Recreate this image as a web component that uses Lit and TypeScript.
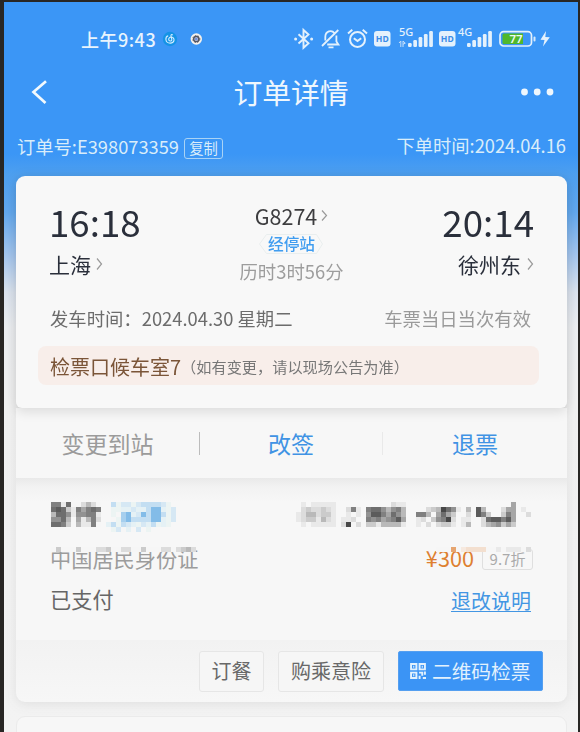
import { LitElement, html, css, svg } from "lit";
import { customElement, property } from "lit/decorators.js";

/* Redaction mosaic: rows of 5px cells, one palette letter per cell, "." is empty. */
@customElement("pixel-mask")
class PixelMask extends LitElement {
  @property({ attribute: false }) rows: string[] = [];
  static palette: Record<string, string> = {
    "0": "#484848", "1": "#5c5c5c", "2": "#6e6e6e", "3": "#808080", "4": "#929292",
    "5": "#a6a6a6", "6": "#b9b9b9", "7": "#cbcbcb", "8": "#dcdcdc", "9": "#e9e9e9",
    a: "#83bce8", b: "#a6cfee", c: "#c3def2", d: "#d6e8f4", e: "#e5f1f5", f: "#ecf4f3",
    o: "#e6a570", p: "#f3dfcf", q: "#f6e9df",
    w: "#f6f6f6",
  };
  static styles = css`
    :host { display: block; line-height: 0; }
    svg { display: block; }
  `;
  render() {
    const w = Math.max(...this.rows.map((r) => r.length)) * 5;
    const h = this.rows.length * 5;
    return html`<svg width=${w} height=${h} shape-rendering="crispEdges">
      ${this.rows.map((r, y) =>
        [...r].map((c, x) =>
          c === "." ? null : svg`<rect x=${x * 5} y=${y * 5} width="5" height="5" fill=${PixelMask.palette[c]}></rect>`
        )
      )}
    </svg>`;
  }
}

@customElement("status-bar")
class StatusBar extends LitElement {
  static styles = css`
    :host { display: flex; align-items: center; height: 24px; padding: 0 28px 0 77px; color: #e9f4fd; }
    .time { font-size: 18px; line-height: 24px; letter-spacing: 0.5px; font-weight: 500; margin-right: 5px; width: 77px; white-space: nowrap; }
    .app { margin-right: 13px; }
    svg { display: block; flex: none; overflow: visible; }
    .icons { display: flex; margin-left: auto; align-items: center; }
    text { font-family: "Noto Sans", sans-serif; font-weight: 600; }
    .net { font-weight: 500; }
    .hd { font-weight: 700; }
  `;
  hd() {
    return svg`<rect x="0" y="4" width="16.5" height="15.5" rx="3" fill="#e4f1fc"></rect>
      <text class="hd" x="8.3" y="14.9" font-size="8.6" text-anchor="middle" fill="#3b8de8">HD</text>`;
  }
  bars() {
    return [0, 1, 2, 3, 4].map(
      (i) => svg`<rect x=${9 + i * 5.3} y=${16 - i * 3} width="3.7" height=${4 + i * 3} rx="1.2" fill="#e4f1fc"></rect>`
    );
  }
  render() {
    return html`
      <span class="time">上午9:43</span>
      <svg class="app" width="14" height="24" viewBox="0 0 14 24" fill="none">
        <circle cx="7" cy="12" r="7.2" fill="#1593e6"></circle>
        <path d="M9.8 8.1C8.6 7 7.7 7.8 8 9l.8 3.4c.3 2-3 2.2-3.1.1-.1-1.6 1.2-2.6 2.8-2.5 3.5.3 3.6 5.9-1.3 6.1C1.8 16.1 1.9 9.7 5.2 8.8" stroke="#d5efff" stroke-width="1.1"></path>
      </svg>
      <svg width="11" height="24" viewBox="0 0 11 24" fill="none">
        <circle cx="6.3" cy="12" r="5.7" fill="#f4f1ec"></circle>
        <circle cx="6.3" cy="12" r="2.6" stroke="#505668" stroke-width="1.5"></circle>
        <circle cx="6.3" cy="12" r="3.5" stroke="#605c62" stroke-width="1" stroke-dasharray="1.5 1.4"></circle>
        <circle cx="6.3" cy="12" r="1.5" fill="#7391dc"></circle>
      </svg>
      <div class="icons">
        <svg width="27" height="24" viewBox="0 0 27 24" fill="none" stroke="#e4f1fc" stroke-width="1.9">
          <path d="M4.500 7.300l10 9-5 4.500V3l5 4.500-10 9"></path>
          <circle cx="1.6" cy="12" r="1.5" fill="#e4f1fc" stroke="none"></circle>
          <circle cx="17.6" cy="12" r="1.5" fill="#e4f1fc" stroke="none"></circle>
        </svg>
        <svg width="26" height="24" viewBox="0 0 26 24" fill="none" stroke="#e4f1fc" stroke-width="1.8">
          <path d="M1 19L17.300 3M4.300 13.500V10c0-6 6.500-7.500 9-4M15.400 8.500v6l2 3H6.200M7.500 20.300h5"></path>
        </svg>
        <svg width="27" height="24" viewBox="0 0 27 24" fill="none" stroke="#e4f1fc" stroke-width="2">
          <circle cx="10.5" cy="12.5" r="7.5"></circle>
          <path d="M6.800 11.200l3.700 2.800 3.700-2.800M1 6.500l4.300-3.700M20 6.500l-4.300-3.700"></path>
        </svg>
        <svg width="25" height="24" viewBox="0 0 25 24">${this.hd()}</svg>
        <svg width="40" height="24" viewBox="0 0 40 24">
          <text class="net" x="0" y="9" font-size="11" fill="#e4f1fc">5G</text>
          <path d="M0 16l1.800-2v6M4 20v-6l2.300 2.200-2.300 1" fill="none" stroke="#c5dffa" stroke-width="1"></path>
          ${this.bars()}
        </svg>
        <svg width="19.5" height="24" viewBox="0 0 19.5 24">${this.hd()}</svg>
        <svg width="41" height="24" viewBox="0 0 41 24">
          <text class="net" x="0" y="9" font-size="11" fill="#e4f1fc">4G</text>${this.bars()}
        </svg>
        <svg width="51" height="24" viewBox="0 0 51 24">
          <rect x="1" y="4.7" width="31.5" height="14.3" rx="3.6" fill="none" stroke="#e4f1fc" stroke-width="1.7"></rect>
          <path d="M5 6.500H24V17H5q-1.500 0-1.500-1.500V8Q3.500 6.500 5 6.500z" fill="#50b82b"></path>
          <rect x="34.5" y="9.5" width="2" height="5" rx="1" fill="#d6e9fc"></rect>
          <text x="17" y="16" font-size="11.5" text-anchor="middle" fill="#eefbf5">77</text>
          <path d="M47 4l-5.500 8.700 4 .3-1.500 6.500 6.800-9.200-4.500-.3z" fill="#e4f1fc"></path>
        </svg>
      </div>
    `;
  }
}

@customElement("app-root")
class AppRoot extends LitElement {
  static styles = css`
    :host { display: block; height: 732px; overflow: hidden; box-sizing: border-box; background: #282624; padding: 2px 2px 0 4px;
      font-family: "Noto Sans CJK SC", sans-serif; color: #666; }
    * { box-sizing: border-box; }
    svg { display: block; flex: none; }
    span, a { white-space: nowrap; }
    .screen { height: 730px; padding-top: 25px; overflow: hidden;
      background: linear-gradient(#3b96f6 0, #3b96f6 152px, #4d9fef 172px, #62a8ee 210px, #a5c6ee 254px, #dbe3ee 290px, #eceef1 325px, #f1f1f1 400px, #f3f3f3 100%); }
    .nav { display: flex; align-items: center; justify-content: space-between; height: 40px; margin-top: 21px; padding: 0 24px 0 27px; color: #eff7fd; }
    .title { font-size: 28.8px; line-height: 40px; margin-left: 14px; }
    .order { display: flex; justify-content: space-between; height: 24px; margin-top: 21px; padding: 0 12px 0 13px; color: #d9edfa; font-size: 18.3px; line-height: 24px; }
    .no { display: flex; align-items: center; padding-top: 2px; gap: 5px; }
    .copy { width: 39px; height: 21px; margin-top: 4px; border: 1px solid #a9d3f5; border-radius: 3px; font-size: 14.3px; line-height: 18px; text-align: center; }
    .cards { margin: 19px 11px 0 12px; filter: drop-shadow(0 2px 6px rgba(60, 60, 60, 0.1)); }
    .trip { position: relative; height: 232px; background: #f8f8f8; border-radius: 9px 9px 6px 6px; box-shadow: 0 4px 12px rgba(0, 0, 0, 0.11); padding: 24px 28px 0 22px; }
    .route { display: grid; grid-template-columns: 1fr 1fr 1fr; height: 100px; padding: 0 5px 0 11px; color: #2a2f3b; }
    .end { display: flex; flex-direction: column; align-items: flex-start; }
    .end.to { align-items: flex-end; }
    .clock { font-size: 36.7px; line-height: 42px; height: 43px; }
    .city { display: flex; align-items: center; gap: 5px; font-size: 21px; line-height: 42px; height: 42px; }
    .to .city { gap: 6px; }
    .mid { display: flex; flex-direction: column; align-items: center; margin-left: 0; }
    .train { display: flex; align-items: center; gap: 4px; font-size: 21.5px; line-height: 32px; height: 31px; color: #3d3d3f; }
    .stops { width: 64px; height: 20px; margin-top: 3px; position: relative; font-size: 15.7px; font-weight: 500; line-height: 19px; text-align: center; color: #409df0; }
    .stops svg { position: absolute; inset: 0; }
    .dur { font-size: 18.4px; line-height: 26px; margin-top: 4px; color: #9d9d9d; }
    .line { display: flex; justify-content: space-between; height: 28px; line-height: 28px; margin-top: 4px; padding: 0 8px 0 12px; font-size: 18.35px; color: #6c6c6c; }
    .valid { color: #9a9a9a; }
    .gate { display: flex; align-items: center; height: 39px; margin-top: 14px; padding: 1px 0 0 12px; border-radius: 8px; background: #f8eeea; color: #7b5538; font-size: 20px; }
    .gate small { font-size: 15.2px; color: #777; }
    .actions { display: grid; grid-template-columns: 183px 183px 185px; height: 70px; background: #f7f7f7; align-items: center; text-align: center; font-size: 23px; line-height: 30px; color: #4093e4; }
    .actions span + span { border-left: 1px solid #e9e9e9; height: 23px; line-height: 22px; }
    .actions span:nth-child(2) { border-left: 1px solid #bcbcbc; }
    .off { color: #9b9b9b; }
    .person { height: 162px; padding: 24px 36px 0 35px; background: linear-gradient(#e9e9e9 0, #f2f2f2 9px, #f7f7f7 24px); }
    .masks { display: flex; height: 25px; }
    .masks .name { margin-right: 5px; }
    .masks .tail { margin-left: auto; }
    .row { display: flex; align-items: center; justify-content: space-between; height: 40px; font-size: 21.2px; line-height: 40px; position: relative; }
    .row > span:first-child { margin-left: -1px; }
    .row.id { margin-top: 11px; margin-bottom: 1px; color: #9c9c9c; }
    .strip { position: absolute; top: 9px; left: 0; }
    .strip.right { left: auto; right: 0; }
    .fare { display: flex; align-items: center; gap: 8px; color: #de8030; font-size: 21.7px; margin-right: -2px; }
    .rate { width: 51px; height: 21px; margin-top: 2px; border: 1px solid #dfdfdf; border-radius: 3px; font-size: 15px; line-height: 18px; text-align: center; color: #aaa; }
    .paid { color: #666; }
    .rules { color: #4396e3; font-size: 20px; line-height: 24px; text-decoration: underline; text-decoration-thickness: 1px; text-underline-offset: 2px; margin-top: 4px; }
    .foot { display: flex; justify-content: flex-end; gap: 14px; height: 62px; padding: 11px 24px 0 0; border-radius: 0 0 9px 9px; background: linear-gradient(#f2f2f2, #f7f7f7); font-size: 20px; }
    .btn { height: 41px; line-height: 38px; border: 1px solid #e6e6e6; border-radius: 3px; text-align: center; color: #686868; background: #f6f6f6; }
    .meal { width: 65px; }
    .ins { width: 106px; }
    .qr { display: flex; align-items: center; gap: 6px; width: 145px; height: 40px; padding-left: 11px; border-radius: 2px; background: #3b94f5; border-color: #559ff0; color: #e2f1fd; font-size: 19.7px; }
    .next { height: 40px; margin: 14px 11px 0 12px; border-radius: 9px; border: 1px solid #ebebeb; background: #f7f7f7; }
  `;
  arrow(w = 7, h = 11) {
    return html`<svg width=${w} height=${h} viewBox="0 0 7 11" preserveAspectRatio="none" fill="none" stroke="#9a9a9a" stroke-width="1.2"><path d="M1 .5l4.500 5L1 10.500"></path></svg>`;
  }
  render() {
    return html`
      <div class="screen">
        <status-bar></status-bar>
        <div class="nav">
          <svg width="17" height="24" viewBox="0 0 17 24" fill="none" stroke="#f2f9fd" stroke-width="2.7"><path d="M15 1.200L2.500 12 14.500 23"></path></svg>
          <span class="title">订单详情</span>
          <svg width="34" height="8" viewBox="0 0 34 8" fill="#eff7fd"><circle cx="4.5" cy="4" r="3.4"></circle><circle cx="17.2" cy="4" r="3.4"></circle><circle cx="30" cy="4" r="3.4"></circle></svg>
        </div>
        <div class="order">
          <div class="no"><span>订单号:E398073359</span><span class="copy">复制</span></div>
          <span>下单时间:2024.04.16</span>
        </div>
        <div class="cards">
          <div class="trip">
            <div class="route">
              <div class="end from"><span class="clock">16:18</span><span class="city">上海${this.arrow(7, 12)}</span></div>
              <div class="mid">
                <span class="train">G8274${this.arrow()}</span>
                <span class="stops"><svg width="64" height="20" viewBox="0 0 64 20" fill="none" stroke="#e9eeee"><path d="M7.500.5h50l6 9.500-6 9.500h-50l-7-9.500z"></path></svg>经停站</span>
                <span class="dur">历时3时56分</span>
              </div>
              <div class="end to"><span class="clock">20:14</span><span class="city">徐州东${this.arrow(7, 12)}</span></div>
            </div>
            <div class="line"><span>发车时间：2024.04.30 星期二</span><span class="valid">车票当日当次有效</span></div>
            <div class="gate"><span>检票口候车室7</span><small>（如有变更，请以现场公告为准）</small></div>
          </div>
          <div class="actions"><span class="off">变更到站</span><span>改签</span><span>退票</span></div>
          <div class="person">
            <div class="masks">
              <pixel-mask class="name" .rows=${["3392ww868w", "2127935323", "6224944339", "4426w59638", "2237w6993w"]}></pixel-mask>
              <pixel-mask .rows=${[".cfddfdccccdf.", ".ffeedeecaaefd", ".fwbaedacaacfd", ".wfbaccccaaefd", "ecfcdefdecfef.", ".fdwewd.f....."]}></pixel-mask>
              <pixel-mask class="tail" .rows=${[
                ".9.99999...........899.....................5...",
                ".8788789..839.32246436....8760249.6.16...855.9.",
                "98668779..9.9.41135246..336.5257..8.137..735..8",
                "98779689.998..34354315..98.74308.99..8211315...",
                ".9w99999.80w8w77966669..9.8.8779.96..8654757...",
              ]}></pixel-mask>
            </div>
            <div class="row id">
              <span>中国居民身份证</span>
              <span class="fare">¥300<span class="rate">9.7折</span></span>
              <pixel-mask class="strip" .rows=${["w7www7www887ww88ww7www88w8768"]}></pixel-mask>
              <pixel-mask class="strip right" .rows=${["wwwowqppppww9w999w8"]}></pixel-mask>
            </div>
            <div class="row"><span class="paid">已支付</span><a class="rules">退改说明</a></div>
          </div>
          <div class="foot">
            <span class="btn meal">订餐</span><span class="btn ins">购乘意险</span>
            <span class="btn qr"><svg width="16" height="16" viewBox="0 0 15 15" fill="none" stroke="#e2f1fd" stroke-width="1.8"><path d="M1 1h5v5H1zM9 1h5v5H9zM1 9h5v5H1zM3 3.500h1M11 3.500h1M3 11.500h1M8.500 9h3v3M14 8v3M9 12v3M12 14h3"></path></svg>二维码检票</span>
          </div>
        </div>
        <div class="next"></div>
      </div>
    `;
  }
}
